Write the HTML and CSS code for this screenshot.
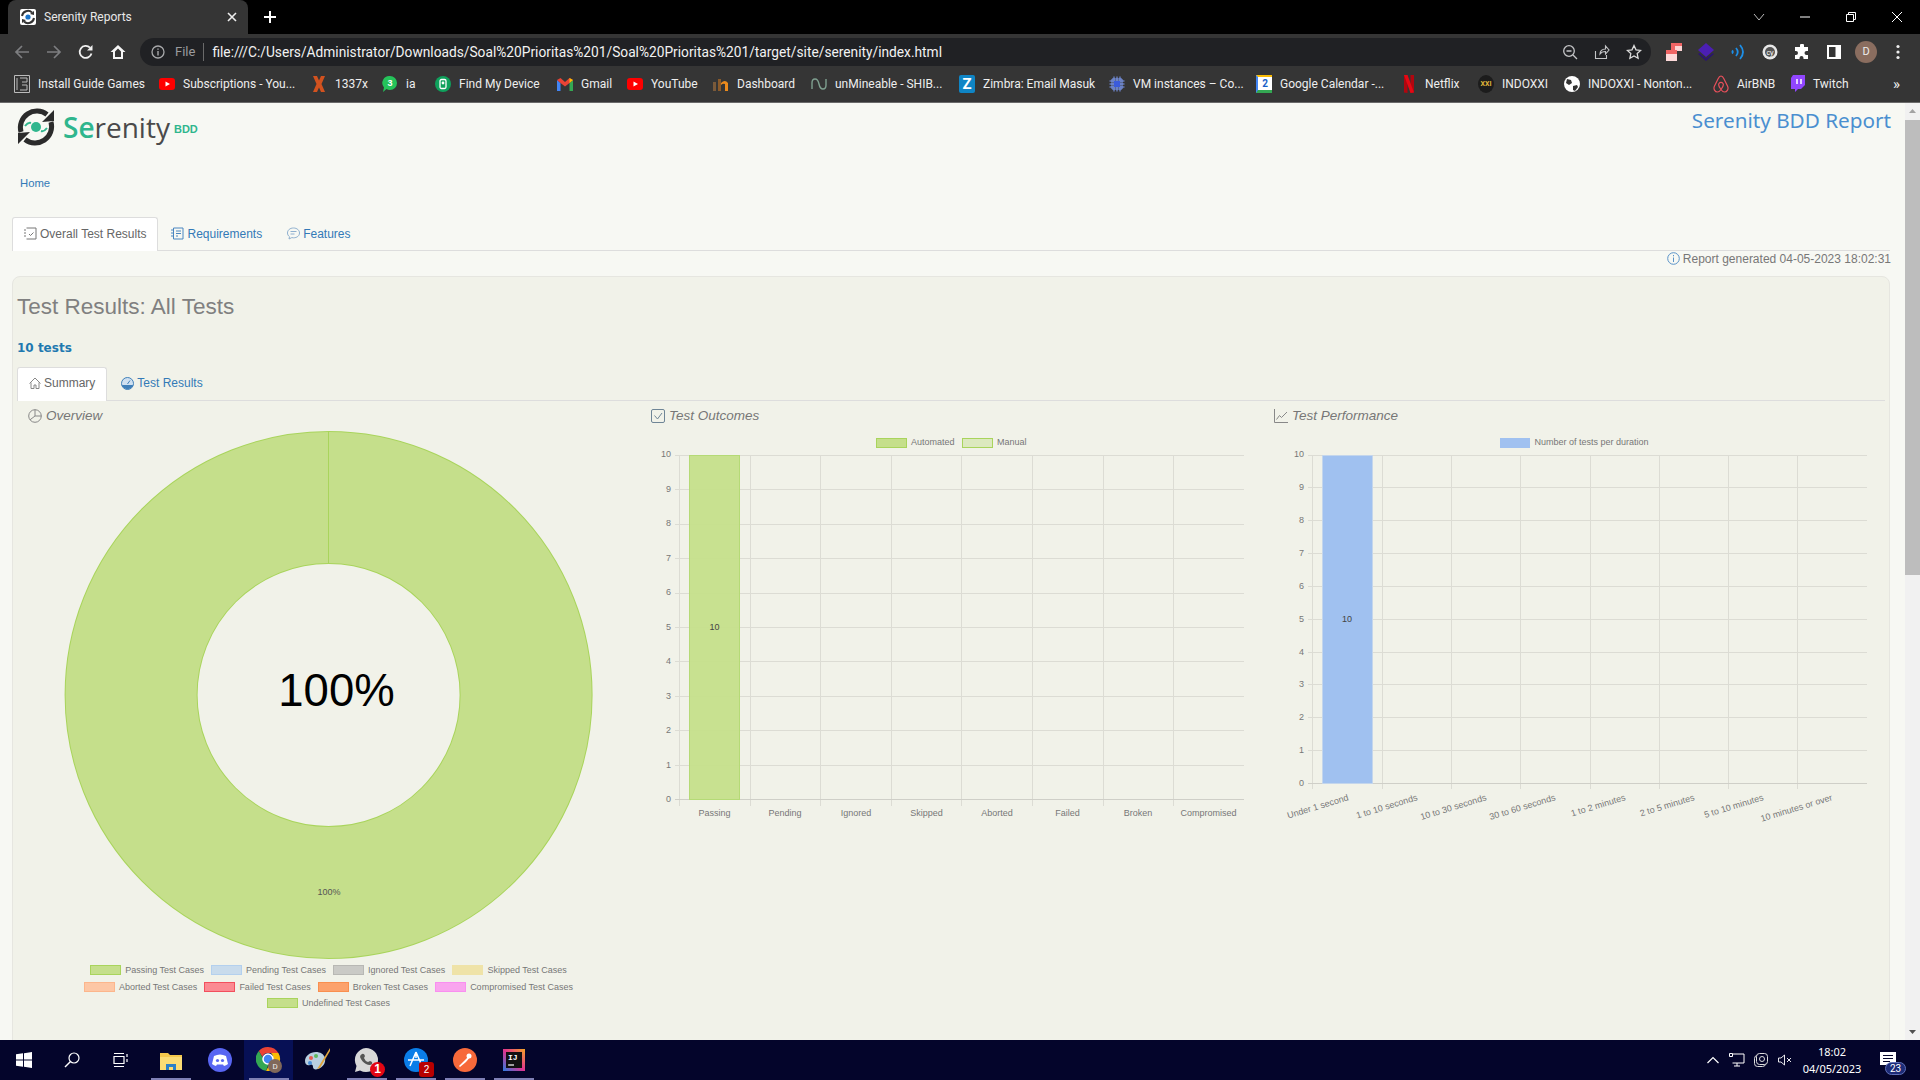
FILE: index.html
```html
<!DOCTYPE html>
<html>
<head>
    <title>Serenity Reports</title>
    <link rel="stylesheet" href="styles.css">
</head>
<body>
    <div class="tabstrip">
        <div class="browser-tab">
            <svg class="favicon" width="16" height="16" viewBox="0 0 16 16"><rect width="16" height="16" rx="2" fill="#fff"/><path d="M2 7a6 6 0 0 1 10-3.500M14 9a6 6 0 0 1-10 3.500" fill="none" stroke="#333" stroke-width="2"/><path d="M10 5l4-3v4zM6 11l-4 3v-4z" fill="#333"/><circle cx="8" cy="8" r="2.600" fill="#1a73c8"/></svg>
            <span class="browser-tab-title">Serenity Reports</span>
            <svg width="10" height="10" viewBox="0 0 10 10"><path d="M1 1l8 8M9 1l-8 8" stroke="#eee" stroke-width="1.600"/></svg>
        </div>
        <svg class="new-tab" width="14" height="14" viewBox="0 0 14 14"><path d="M7 1v12M1 7h12" stroke="#fff" stroke-width="2"/></svg>
        <div class="window-controls">
            <svg width="46" height="14" viewBox="0 0 46 14"><path d="M18 4l5 6 5-6" fill="none" stroke="#bbb"/></svg>
            <svg width="46" height="14" viewBox="0 0 46 14"><path d="M18 7h10" stroke="#fff"/></svg>
            <svg width="46" height="14" viewBox="0 0 46 14"><path d="M18.500 4.500h7v7h-7zM20.500 4.500v-2h7v7h-2" fill="none" stroke="#fff"/></svg>
            <svg width="46" height="14" viewBox="0 0 46 14"><path d="M18 2l10 10M28 2l-10 10" stroke="#fff"/></svg>
        </div>
    </div>

    <div class="toolbar">
        <div class="tool"><svg width="16" height="16" viewBox="0 0 16 16"><path d="M15 8H2M8 2L2 8l6 6" fill="none" stroke="#7d7e80" stroke-width="1.700"/></svg></div>
        <div class="tool"><svg width="16" height="16" viewBox="0 0 16 16"><path d="M1 8h13M8 2l6 6-6 6" fill="none" stroke="#7d7e80" stroke-width="1.700"/></svg></div>
        <div class="tool"><svg width="16" height="16" viewBox="0 0 16 16"><path d="M13.500 9.500A6 6 0 1 1 12 3.700" fill="none" stroke="#f0f0f0" stroke-width="1.800"/><path d="M14.500 1v5.500H9z" fill="#f0f0f0"/></svg></div>
        <div class="tool"><svg width="18" height="18" viewBox="0 0 18 18"><path d="M9 2L1.500 9H4v7h10V9h2.500zM6 14V8.500L9 5.500l3 3V14z" fill="#f5f5f5" fill-rule="evenodd"/></svg></div>
        <div class="address">
            <svg width="16" height="16" viewBox="0 0 16 16"><circle cx="8" cy="8" r="6" fill="none" stroke="#a8a9ab" stroke-width="1.300"/><path d="M8 7v4.500M8 4.500v1.300" stroke="#a8a9ab" stroke-width="1.400"/></svg>
            <span class="address-scheme">File</span>
            <span class="address-url">file:///C:/Users/Administrator/Downloads/Soal%20Prioritas%201/Soal%20Prioritas%201/target/site/serenity/index.html</span>
            <div class="address-actions">
                <svg width="16" height="16" viewBox="0 0 16 16"><circle cx="7" cy="7" r="5.300" fill="none" stroke="#c4c5c7" stroke-width="1.300"/><path d="M11 11l4 4M4.500 7h5" stroke="#c4c5c7" stroke-width="1.300"/></svg>
                <svg width="16" height="16" viewBox="0 0 16 16"><path d="M1.500 7v7.500h11V11M6 10c0-3 2-5 5.500-5V2L15 6l-3.500 4V7.500C9 7.500 7 8.500 6 10z" fill="none" stroke="#c4c5c7" stroke-width="1.100"/></svg>
                <svg width="16" height="16" viewBox="0 0 16 16"><path d="M8 1.500l2 4.300 4.700.6-3.500 3.200.9 4.700L8 12l-4.100 2.300.9-4.700L1.300 6.400 6 5.800z" fill="none" stroke="#dcdcdc" stroke-width="1.300"/></svg>
            </div>
        </div>
        <div class="extensions">
            <div class="tool"><svg width="16" height="18" viewBox="0 0 16 18"><path d="M5 0h11v7H5z" fill="#f06565"/><path d="M9 3h7v5H9z" fill="#fcd5d5"/><path d="M0 7h11v4H0z" fill="#f06565"/><path d="M0 11h11v7H0z" fill="#fdd9d9"/></svg></div>
            <div class="tool"><svg width="16" height="18" viewBox="0 0 16 18"><path d="M8 0l8 7-8 7-8-7z" fill="#4b1fb3"/><path d="M1.500 10L8 15.500 14.500 10 16 11l-8 7-8-7z" fill="#2b1570"/></svg></div>
            <div class="tool"><svg width="14" height="16" viewBox="0 0 14 16"><path d="M1 6.500q1.500 1.500 0 3M5 4q3.500 4 0 8M9 1q6 7 0 14" fill="none" stroke="#1d8fe8" stroke-width="1.800"/></svg></div>
            <div class="tool"><svg width="16" height="16" viewBox="0 0 16 16"><circle cx="8" cy="8" r="7.500" fill="#e8e8e8"/><circle cx="8" cy="8" r="5" fill="#555"/><text class="ext-letters" x="8" y="10.500">cy</text></svg></div>
            <div class="tool"><svg width="16" height="16" viewBox="0 0 16 16"><path d="M6 1.500a2 2 0 0 1 4 0V3h4v4h-1.500a2 2 0 0 0 0 4H14v4H9.500v-1a2 2 0 0 0-4 0v1H1v-4h1a2 2 0 0 0 0-4H1V3h5z" fill="#fff"/></svg></div>
            <div class="tool"><svg width="14" height="14" viewBox="0 0 14 14"><path d="M0 0h14v14H0zM8.500 2H2v10h6.500z" fill="#fff" fill-rule="evenodd"/></svg></div>
            <div class="tool"><span class="avatar">D</span></div>
            <div class="tool"><svg width="4" height="16" viewBox="0 0 4 16"><circle cx="2" cy="2.500" r="1.600" fill="#eee"/><circle cx="2" cy="8" r="1.600" fill="#eee"/><circle cx="2" cy="13.500" r="1.600" fill="#eee"/></svg></div>
        </div>
    </div>

    <div class="bookmarks">
        <div class="bookmark"><svg width="16" height="18" viewBox="0 0 16 18"><path d="M.5.500h15v17H.5z" fill="#333" stroke="#bbb"/><path d="M3 3v12M6 3h7v4H8M6 15h7v-5H8" fill="none" stroke="#bbb"/></svg>Install Guide Games</div>
        <div class="bookmark"><svg width="16" height="12" viewBox="0 0 16 12"><rect width="16" height="12" rx="3" fill="#f00"/><path d="M6.500 3.500v5L11 6z" fill="#fff"/></svg>Subscriptions - You...</div>
        <div class="bookmark"><svg width="16" height="16" viewBox="-1 0 16 16"><path d="M1 0h4l2 4.500L9 0h4L9.500 8l3.500 8H9L7 11.500 5 16H1l3.500-8z" fill="#d2521f"/></svg>1337x</div>
        <div class="bookmark"><svg width="16" height="18" viewBox="0 0 16 18"><path d="M8 1a7 7 0 0 1 0 14q-2 0-3.500-1L1 17l1-4.500A7 7 0 0 1 8 1z" fill="#25c35a"/><text class="ext-digit" x="8" y="11">3</text></svg>ia</div>
        <div class="bookmark"><svg width="16" height="16" viewBox="0 0 16 16"><circle cx="8" cy="8" r="8" fill="#0fa15c"/><rect x="5" y="3.500" width="6" height="9" rx="1.500" fill="none" stroke="#fff" stroke-width="1.300"/><circle cx="8" cy="7" r="1.400" fill="#fff"/></svg>Find My Device</div>
        <div class="bookmark"><svg width="16" height="13" viewBox="0 0 16 13"><path d="M0 2v11h3.500V5z" fill="#4285f4"/><path d="M16 2v11h-3.500V5z" fill="#34a853"/><path d="M0 2l3.500-2L8 4l4.500-4L16 2l-3.500 3L8 8.500 3.500 5z" fill="#ea4335"/><path d="M12.500 0L16 2l-3.500 3z" fill="#fbbc04"/></svg>Gmail</div>
        <div class="bookmark"><svg width="16" height="12" viewBox="0 0 16 12"><rect width="16" height="12" rx="3" fill="#f00"/><path d="M6.500 3.500v5L11 6z" fill="#fff"/></svg>YouTube</div>
        <div class="bookmark"><svg width="16" height="14" viewBox="0 0 16 14"><path d="M0 5h3v9H0z" fill="#7a5a3a"/><path d="M5 2h3v12H5z" fill="#8a5a2a"/><path d="M8 6q4-4 7 0v8h-3V7q-2-1-4 1z" fill="#ec8a1c"/></svg>Dashboard</div>
        <div class="bookmark"><svg width="16" height="12" viewBox="0 0 16 12"><path d="M1 11V5q0-4 3-4t4 5 4 5 3-4V1" fill="none" stroke="#7fa090" stroke-width="1.400"/></svg>unMineable - SHIB...</div>
        <div class="bookmark"><span class="bookmark-z">Z</span>Zimbra: Email Masuk</div>
        <div class="bookmark"><svg width="16" height="16" viewBox="0 0 16 16"><path d="M3 3h10v10H3zM5 .500v15M8 .500v15M11 .500v15M.500 5h15M.500 8h15M.500 11h15" fill="none" stroke="#7f9cf5"/><rect x="5" y="5" width="6" height="6" fill="#3b5bdb"/></svg>VM instances – Co...</div>
        <div class="bookmark"><span class="bookmark-cal">2</span>Google Calendar -...</div>
        <div class="bookmark"><svg width="16" height="18" viewBox="-3 0 16 18"><path d="M0 0h3.500v18L0 17.500z" fill="#b1060f"/><path d="M6.500 0H10v17.500L6.500 18z" fill="#b1060f"/><path d="M0 0h3.500L10 17.500 6.500 18z" fill="#e50914"/></svg>Netflix</div>
        <div class="bookmark"><span class="bookmark-xxi">XXI</span>INDOXXI</div>
        <div class="bookmark"><svg width="16" height="16" viewBox="0 0 16 16"><circle cx="8" cy="8" r="8" fill="#fff"/><path d="M3 3l4 1 1 3-3 2-3-2zM9 10l4-1 1 2-3 4-2-1z" fill="#333"/></svg>INDOXXI - Nonton...</div>
        <div class="bookmark"><svg width="16" height="18" viewBox="0 0 16 18"><path d="M8 1C6 1 5.500 3 4.500 5L1.500 11c-1.500 3 .5 6 3 6 1.500 0 2.500-1 3.500-2.500C9 16 10 17 11.500 17c2.500 0 4.500-3 3-6l-3-6C10.500 3 10 1 8 1zM8 14.500C6 12 5 10 6 8.500s3-1.500 4 0 0 3.500-2 6z" fill="none" stroke="#e8505b" stroke-width="1.200"/></svg>AirBNB</div>
        <div class="bookmark"><svg width="14" height="18" viewBox="0 0 14 18"><path d="M2 0h12v10l-4 4H7l-3 3v-3H0V3z" fill="#9146ff"/><path d="M6 4v5M10 4v5" stroke="#fff" stroke-width="1.500"/></svg>Twitch</div>
        <span class="bookmark-more">»</span>
    </div>

    <div class="viewport">
        <div class="page">
            <div class="page-header">
                <div class="logo">
                    <svg width="40" height="40" viewBox="0 0 40 40">
                        <path d="M5 25A16.500 16.500 0 0 1 31 7.500M35 15A16.500 16.500 0 0 1 9 32.500" fill="none" stroke="#2b2b2b" stroke-width="5"/>
                        <path d="M26 15l12-1V3zM14 25L2 26v11z" fill="#2b2b2b"/>
                        <circle cx="20" cy="20" r="5" fill="#2fb68d"/>
                        <path d="M9 19q3-4 6-3M31 21q-3 4-6 3" fill="none" stroke="#2fb68d" stroke-width="2"/>
                    </svg>
                    <span class="logo-name"><span class="logo-accent">Se</span>renity</span>
                    <span class="logo-bdd">BDD</span>
                </div>
                <div class="report-name">Serenity BDD Report</div>
            </div>

            <div class="breadcrumb"><a href="#">Home</a></div>

            <div class="tabs">
                <a class="tab active" href="#"><svg width="13" height="13" viewBox="0 0 13 13"><path d="M2.500 1h9.500v11H2.500M0 3h2M0 6h2M0 9h2M5 7l1.500 1.500 3-3" fill="none" stroke="#777"/></svg>Overall Test Results</a>
                <a class="tab" href="#"><svg width="13" height="13" viewBox="0 0 13 13"><path d="M2.500 1h9.500v11H2.500zM0 3h2M0 6h2M0 9h2M5 4h5M5 6.500h5M5 9h2" fill="none" stroke="#4a86c0"/></svg>Requirements</a>
                <a class="tab" href="#"><svg width="13" height="13" viewBox="0 0 13 13"><path d="M6.500 1C3 1 .5 3 .5 6c0 1.500.7 2.800 2 3.700L2 12l2.800-1.400c.5.100 1.100.2 1.700.2 3.500 0 6-2 6-4.800S10 1 6.500 1zM3.500 4.500h6M3.500 7h4" fill="none" stroke="#8fb0cf"/></svg>Features</a>
            </div>

            <div class="generated">
                <svg width="13" height="13" viewBox="0 0 13 13"><circle cx="6.500" cy="6.500" r="5.800" fill="none" stroke="#5a93c8"/><path d="M6.500 5.500v4.500M6.500 3v1.300" stroke="#5a93c8"/></svg>
                Report generated 04-05-2023 18:02:31
            </div>

            <div class="panel">
                <h1>Test Results: All Tests</h1>
                <div class="test-count">10 tests</div>

                <div class="tabs inner-tabs">
                    <a class="tab active" href="#"><svg width="12" height="12" viewBox="0 0 12 12"><path d="M.5 6.500L6 1l5.500 5.500M2 5.500v6h3V8h2v3.500h3v-6" fill="none" stroke="#888"/></svg>Summary</a>
                    <a class="tab" href="#"><svg width="13" height="13" viewBox="0 0 13 13"><circle cx="6.500" cy="6.500" r="6" fill="#cfe0f0" stroke="#3f7fb8"/><path d="M.8 8h11.400A6 6 0 0 1 .8 8z" fill="#3f7fb8"/><path d="M6.500 7l2.500-3.500" stroke="#3f7fb8"/></svg>Test Results</a>
                </div>

                <div class="summary">
                    <section class="summary-col">
                        <h2><svg width="14" height="14" viewBox="0 0 14 14"><circle cx="7" cy="7" r="6.300" fill="none" stroke="#888"/><path d="M7 .7V7l-5 3.800M7 7h6.300" fill="none" stroke="#888"/></svg>Overview</h2>
                        <svg class="donut" width="623" height="532" viewBox="17 430 623 532">
                            <circle cx="328.600" cy="695" r="197.500" fill="none" stroke="#a9d45c" stroke-width="133"/>
                            <circle cx="328.600" cy="695" r="197.500" fill="none" stroke="#c5df8b" stroke-width="131"/>
                            <path d="M328.500 431.500v132" stroke="#a9d45c"/>
                            <text class="donut-total" x="336.500" y="706">100%</text>
                            <text class="donut-slice" x="329" y="895">100%</text>
                        </svg>
                        <div class="legend">
                            <span class="legend-item"><i class="swatch passing"></i>Passing Test Cases</span>
                            <span class="legend-item"><i class="swatch pending"></i>Pending Test Cases</span>
                            <span class="legend-item"><i class="swatch ignored"></i>Ignored Test Cases</span>
                            <span class="legend-item"><i class="swatch skipped"></i>Skipped Test Cases</span>
                            <span class="legend-item"><i class="swatch aborted"></i>Aborted Test Cases</span>
                            <span class="legend-item"><i class="swatch failed"></i>Failed Test Cases</span>
                            <span class="legend-item"><i class="swatch broken"></i>Broken Test Cases</span>
                            <span class="legend-item"><i class="swatch compromised"></i>Compromised Test Cases</span>
                            <span class="legend-item"><i class="swatch passing"></i>Undefined Test Cases</span>
                        </div>
                    </section>

                    <section class="summary-col">
                        <h2><svg width="14" height="14" viewBox="0 0 14 14"><rect x=".5" y=".5" width="13" height="13" rx="1.500" fill="none" stroke="#6f8596"/><path d="M3.500 6.500L6.500 10l4.500-6" fill="none" stroke="#6f8596"/></svg>Test Outcomes</h2>
                        <svg class="chart" width="623" height="400" viewBox="640 430 623 400">
                            <rect x="876.500" y="438.500" width="30" height="9" fill="#c5df8b" stroke="#a9d45c"/>
                            <text class="chart-text" x="911" y="444.500">Automated</text>
                            <rect x="962.500" y="438.500" width="30" height="9" fill="#dce9bf" stroke="#a9d45c"/>
                            <text class="chart-text" x="997" y="444.500">Manual</text>
                            <path class="grid" d="M675 455.500h569M675 489.500h569M675 524.500h569M675 558.500h569M675 593.500h569M675 627.500h569M675 661.500h569M675 696.500h569M675 730.500h569M675 765.500h569"/>
                            <path class="grid" d="M679.500 455v351M750.500 455v351M820.500 455v351M891.500 455v351M961.500 455v351M1032.500 455v351M1103.500 455v351M1173.500 455v351"/>
                            <path class="axis" d="M675 799.500h569"/>
                            <rect x="689.500" y="455.500" width="50" height="344" fill="#c5df8b" fill-opacity=".95" stroke="#b5da76"/>
                            <text class="tick-y" x="671" y="457">10</text>
                            <text class="tick-y" x="671" y="492">9</text>
                            <text class="tick-y" x="671" y="526">8</text>
                            <text class="tick-y" x="671" y="561">7</text>
                            <text class="tick-y" x="671" y="595">6</text>
                            <text class="tick-y" x="671" y="630">5</text>
                            <text class="tick-y" x="671" y="664">4</text>
                            <text class="tick-y" x="671" y="699">3</text>
                            <text class="tick-y" x="671" y="733">2</text>
                            <text class="tick-y" x="671" y="768">1</text>
                            <text class="tick-y" x="671" y="802">0</text>
                            <text class="bar-value" x="714.500" y="630">10</text>
                            <text class="tick-x" x="714.500" y="816">Passing</text>
                            <text class="tick-x" x="785" y="816">Pending</text>
                            <text class="tick-x" x="856" y="816">Ignored</text>
                            <text class="tick-x" x="926.500" y="816">Skipped</text>
                            <text class="tick-x" x="997" y="816">Aborted</text>
                            <text class="tick-x" x="1067.500" y="816">Failed</text>
                            <text class="tick-x" x="1138" y="816">Broken</text>
                            <text class="tick-x" x="1208.500" y="816">Compromised</text>
                        </svg>
                    </section>

                    <section class="summary-col">
                        <h2><svg width="14" height="14" viewBox="0 0 14 14"><path d="M.5 0v13.500H14M2.500 10.500l3-4 2 2L13 3" fill="none" stroke="#888"/></svg>Test Performance</h2>
                        <svg class="chart" width="623" height="400" viewBox="1263 430 623 400">
                            <rect x="1500" y="438" width="30" height="10" fill="#a0c1f0"/>
                            <text class="chart-text" x="1534.500" y="444.500">Number of tests per duration</text>
                            <path class="grid" d="M1308 455.500h559M1308 487.500h559M1308 520.500h559M1308 553.500h559M1308 586.500h559M1308 619.500h559M1308 652.500h559M1308 684.500h559M1308 717.500h559M1308 750.500h559"/>
                            <path class="grid" d="M1312.500 455v334M1382.500 455v334M1451.500 455v334M1520.500 455v334M1590.500 455v334M1659.500 455v334M1728.500 455v334M1797.500 455v334"/>
                            <path class="axis" d="M1308 783.500h559"/>
                            <rect x="1322.500" y="455.500" width="50" height="328" fill="#a0c1f0" stroke="#c4d6ec"/>
                            <text class="tick-y" x="1304" y="457">10</text>
                            <text class="tick-y" x="1304" y="490">9</text>
                            <text class="tick-y" x="1304" y="523">8</text>
                            <text class="tick-y" x="1304" y="556">7</text>
                            <text class="tick-y" x="1304" y="589">6</text>
                            <text class="tick-y" x="1304" y="622">5</text>
                            <text class="tick-y" x="1304" y="655">4</text>
                            <text class="tick-y" x="1304" y="687">3</text>
                            <text class="tick-y" x="1304" y="720">2</text>
                            <text class="tick-y" x="1304" y="753">1</text>
                            <text class="tick-y" x="1304" y="786">0</text>
                            <text class="bar-value" x="1347" y="622">10</text>
                            <text class="tick-slant" transform="translate(1349 800) rotate(-17)">Under 1 second</text>
                            <text class="tick-slant" transform="translate(1418 800) rotate(-17)">1 to 10 seconds</text>
                            <text class="tick-slant" transform="translate(1487 800) rotate(-17)">10 to 30 seconds</text>
                            <text class="tick-slant" transform="translate(1556 800) rotate(-17)">30 to 60 seconds</text>
                            <text class="tick-slant" transform="translate(1626 800) rotate(-17)">1 to 2 minutes</text>
                            <text class="tick-slant" transform="translate(1695 800) rotate(-17)">2 to 5 minutes</text>
                            <text class="tick-slant" transform="translate(1764 800) rotate(-17)">5 to 10 minutes</text>
                            <text class="tick-slant" transform="translate(1833 800) rotate(-17)">10 minutes or over</text>
                        </svg>
                    </section>
                </div>
            </div>
        </div>
        <div class="scrollbar">
            <svg width="15" height="17" viewBox="0 0 15 17"><path d="M4 10l3.500-4 3.500 4z" fill="#a3a3a3"/></svg>
            <div class="scrollbar-thumb"></div>
            <div class="scrollbar-rest"></div>
            <svg width="15" height="17" viewBox="0 0 15 17"><path d="M4 7l3.500 4 3.500-4z" fill="#505050"/></svg>
        </div>
    </div>

    <div class="taskbar">
        <div class="task"><svg width="16" height="16" viewBox="0 0 16 16"><path d="M0 2.300l7-1v6.300H0zM8 1.200L16 0v7.600H8zM0 8.500h7v6.200l-7-1zM8 8.500h8V16l-8-1.200z" fill="#fff"/></svg></div>
        <div class="task"><svg width="16" height="16" viewBox="0 0 16 16"><circle cx="10" cy="6" r="5" fill="none" stroke="#fff" stroke-width="1.200"/><path d="M6.500 9.500L1 15" stroke="#fff" stroke-width="1.400"/></svg></div>
        <div class="task"><svg width="16" height="16" viewBox="0 0 16 16"><path d="M1 1.500h10M1 14.500h10M1 4.500h10v7H1zM14 2v3M14 7v3" fill="none" stroke="#fff" stroke-width="1.200"/></svg></div>
        <div class="task open"><svg width="22" height="19" viewBox="0 0 22 19"><path d="M0 2h8l2 2h12v15H0z" fill="#f5c84c"/><path d="M0 6h22v13H0z" fill="#fbdc74"/><path d="M6 13h10v6h-3v-3H9v3H6z" fill="#2a80c8"/></svg></div>
        <div class="task"><svg width="24" height="24" viewBox="0 0 24 24"><circle cx="12" cy="12" r="12" fill="#5865f2"/><path d="M6 8q6-3 12 0l2 8q-2 1.500-4 2l-1-1.500H9L8 18q-2-.5-4-2z" fill="#fff"/><circle cx="9.500" cy="12.500" r="1.600" fill="#5865f2"/><circle cx="14.500" cy="12.500" r="1.600" fill="#5865f2"/></svg></div>
        <div class="task open current"><svg width="26" height="26" viewBox="0 0 26 26"><path d="M12 0a12 12 0 0 1 10.400 6H12a6 6 0 0 0-5.700 4L2.800 4A12 12 0 0 1 12 0z" fill="#ea4335"/><path d="M2.800 4l5.200 9a6 6 0 0 0 5 3l-3 7.800A12 12 0 0 1 2.800 4z" fill="#34a853"/><path d="M22.400 6A12 12 0 0 1 10 23.800l5-8.800a6 6 0 0 0 0-9z" fill="#fbbc04"/><circle cx="12" cy="12" r="5" fill="#4285f4" stroke="#fff" stroke-width="1.500"/><circle cx="19" cy="19" r="7" fill="#80685a"/><text class="task-avatar" x="19" y="22">D</text></svg></div>
        <div class="task"><svg width="26" height="24" viewBox="0 0 26 24"><path d="M11 4C5 4 0 8 0 13c0 4 3 5 5 4s3 0 3 2 2 3 5 2c5-2 8-6 7-11-1-4-5-6-9-6z" fill="#b9cfe0"/><circle cx="6" cy="10" r="2" fill="#e85a4f"/><circle cx="11" cy="8" r="2" fill="#5fb85f"/><circle cx="5" cy="15" r="2" fill="#4a8fd8"/><path d="M25 0L14 18l-2 3 3-1L25 3z" fill="#e0a43c"/></svg></div>
        <div class="task open"><svg width="26" height="26" viewBox="0 0 26 26"><path d="M12 1a12 12 0 0 1 0 24q-3 0-6-1.500L1 25l1.500-6A12 12 0 0 1 12 1z" fill="#d8d8d8"/><path d="M8 7q2-1 3 2l-1 2q1 3 4 4l2-1q3 1 2 3-2 2-6 0t-6-7q0-2 2-3z" fill="#555"/></svg><span class="badge round">1</span></div>
        <div class="task open"><svg width="24" height="24" viewBox="0 0 24 24"><circle cx="12" cy="12" r="12" fill="#0a7de8"/><path d="M12 4L6 18M12 4l6 14M4 12h16M12 4v6" fill="none" stroke="#fff" stroke-width="1.500"/></svg><span class="badge square">2</span></div>
        <div class="task open"><svg width="24" height="24" viewBox="0 0 24 24"><circle cx="12" cy="12" r="12" fill="#f7693a"/><path d="M6 18l6-6 5-5 1 1-5 6-6 5z" fill="#fff"/><circle cx="16" cy="8" r="2.500" fill="#fff"/></svg></div>
        <div class="task open"><svg width="22" height="22" viewBox="0 0 22 22"><defs><linearGradient id="ij" x1="0" y1="1" x2="1" y2="0"><stop offset="0" stop-color="#2a7de1"/><stop offset=".5" stop-color="#e0338f"/><stop offset="1" stop-color="#f5a623"/></linearGradient></defs><rect width="22" height="22" fill="url(#ij)"/><rect x="3" y="3" width="16" height="16" fill="#111"/><text class="task-ij" x="5" y="11">IJ</text><path d="M5 16h6" stroke="#fff" stroke-width="1.200"/></svg></div>
        <div class="tray">
            <div class="tray-icon"><svg width="12" height="8" viewBox="0 0 12 8"><path d="M.5 7L6 1.500 11.500 7" fill="none" stroke="#fff" stroke-width="1.200"/></svg></div>
            <div class="tray-icon"><svg width="16" height="14" viewBox="0 0 16 14"><path d="M3.500 1H15v9H3.500M8 10v3M5 13h6M.5.500h3v3h-3z" fill="none" stroke="#fff"/></svg></div>
            <div class="tray-icon"><svg width="14" height="14" viewBox="0 0 14 14"><rect x=".5" y="2.500" width="11" height="11" rx="3" fill="none" stroke="#ddd"/><rect x="2.500" y=".5" width="11" height="11" rx="3" fill="#04052b" stroke="#ddd"/><circle cx="8" cy="6" r="2.500" fill="none" stroke="#ddd"/></svg></div>
            <div class="tray-icon"><svg width="14" height="12" viewBox="0 0 14 12"><path d="M.5 4v4h2.500L6.500 11V1L3 4zM9 4l4 4M13 4l-4 4" fill="none" stroke="#fff" stroke-width=".9"/></svg></div>
            <div class="clock"><span>18:02</span><span>04/05/2023</span></div>
            <div class="notifications">
                <svg width="16" height="13" viewBox="0 0 16 13"><path d="M0 0h16v13H0z" fill="#fff"/><path d="M3 3.500h10M3 6.500h10M3 9.500h7" stroke="#04052b"/></svg>
                <span class="notification-count">23</span>
            </div>
        </div>
    </div>
</body>
</html>
```

FILE: styles.css
```css
* {
    box-sizing: border-box;
}

html, body {
    height: 100%;
}

body {
    margin: 0;
    overflow: hidden;
    display: flex;
    flex-direction: column;
    font-family: 'Liberation Sans', Arial, sans-serif;
    background-color: #f7f8f3;
}

a {
    text-decoration: none;
}

svg {
    flex: none;
    display: block;
}

/* browser chrome */
.tabstrip {
    height: 34px;
    display: flex;
    align-items: center;
    background-color: #000;
    padding-left: 8px;
}

.browser-tab {
    width: 240px;
    height: 34px;
    display: flex;
    align-items: center;
    padding: 0 11px 0 12px;
    background-color: #353535;
    border-radius: 8px 8px 0 0;
}

.browser-tab-title {
    flex: 1;
    margin-left: 8px;
    font-family: Roboto, sans-serif;
    font-size: 12px;
    color: #e8e8e8;
}

.new-tab {
    margin-left: 15px;
}

.window-controls {
    margin-left: auto;
    display: flex;
    gap: 0;
}

.toolbar {
    height: 34px;
    display: flex;
    align-items: center;
    padding: 2px 0 0 6px;
    background-color: #353535;
}

.tool {
    width: 32px;
    height: 32px;
    display: flex;
    align-items: center;
    justify-content: center;
}

.address {
    flex: 1;
    height: 28px;
    margin-left: 6px;
    display: flex;
    align-items: center;
    padding: 0 9px 0 10px;
    background-color: #202124;
    border-radius: 14px;
}

.address-scheme {
    margin-left: 9px;
    padding-right: 8px;
    border-right: 1px solid #6a6a6a;
    font-family: Roboto, sans-serif;
    font-size: 13px;
    line-height: 18px;
    color: #9a9b9d;
}

.address-url {
    margin-left: 8px;
    font-family: Roboto, sans-serif;
    font-size: 13.740px;
    color: #f2f2f2;
}

.address-actions {
    margin-left: auto;
    display: flex;
    gap: 16px;
}

.extensions {
    display: flex;
    width: 256px;
    margin-left: 7px;
    margin-right: 6px;
}

.avatar {
    width: 22px;
    height: 22px;
    border-radius: 50%;
    background-color: #8a6d5f;
    color: #eee;
    font-family: Roboto, sans-serif;
    font-size: 11px;
    line-height: 22px;
    text-align: center;
}

.ext-letters {
    font-family: 'Liberation Sans', sans-serif;
    font-size: 7px;
    fill: #fff;
    text-anchor: middle;
}

.ext-digit {
    font-family: 'Liberation Sans', sans-serif;
    font-size: 9px;
    font-weight: bold;
    fill: #fff;
    text-anchor: middle;
}

.bookmarks {
    height: 35px;
    display: grid;
    grid-template-columns: 145px 152px 71px 53px 122px 70px 86px 98px 148px 150px 147px 145px 77px 86px 149px 78px 79px 1fr;
    align-items: center;
    padding: 0 0 2px 14px;
    background-color: #353535;
    border-bottom: 1px solid #6a6a6a;
    font-family: Roboto, sans-serif;
    font-size: 12px;
    color: #eee;
}

.bookmark {
    display: flex;
    align-items: center;
    gap: 8px;
    white-space: nowrap;
}

.bookmark-z {
    width: 16px;
    height: 18px;
    background-color: #0f85c5;
    color: #fff;
    font-weight: bold;
    font-size: 15px;
    line-height: 18px;
    text-align: center;
    border-radius: 2px;
}

.bookmark-cal {
    width: 16px;
    height: 18px;
    background-color: #fff;
    border-left: 2px solid #4285f4;
    border-top: 2px solid #fbbc04;
    border-bottom: 3px solid #34a853;
    color: #1a5fc8;
    font-size: 10px;
    font-weight: bold;
    line-height: 13px;
    text-align: center;
}

.bookmark-xxi {
    width: 16px;
    height: 18px;
    background-color: #1c1c1c;
    border-radius: 50%;
    color: #e0b43a;
    font-size: 7px;
    font-weight: bold;
    line-height: 18px;
    text-align: center;
}

.bookmark-more {
    padding-left: 23px;
    font-size: 15px;
    color: #eee;
}

/* report page */
.viewport {
    flex: 1;
    min-height: 0;
    display: flex;
}

.page {
    flex: 1;
    min-width: 0;
    overflow: hidden;
    padding: 0 15px 0 12px;
}

.page-header {
    height: 62px;
    display: flex;
    justify-content: space-between;
    align-items: flex-start;
    padding: 4px 0 0 4px;
}

.logo {
    display: flex;
    align-items: center;
}

.logo-name {
    margin-left: 7px;
    font-family: 'Open Sans', sans-serif;
    font-size: 28px;
    line-height: 40px;
    color: #4a4a4a;
}

.logo-accent {
    font-weight: 600;
    color: #2fb68d;
}

.logo-bdd {
    margin: 3px 0 0 4px;
    font-size: 11px;
    font-weight: bold;
    color: #2fb68d;
}

.report-name {
    margin-right: -1px;
    font-family: 'Noto Sans', sans-serif;
    font-size: 20.700px;
    line-height: 26px;
    color: #4a8fd0;
}

.breadcrumb {
    height: 36px;
    margin-bottom: 16px;
    padding-left: 8px;
    font-size: 11.300px;
    line-height: 36px;
}

.breadcrumb a {
    color: #337ab7;
}

.tabs {
    display: flex;
    height: 34px;
    border-bottom: 1px solid #ddd;
}

.tab {
    display: flex;
    align-items: center;
    gap: 3px;
    height: 34px;
    padding: 0 11px 2px 12px;
    border: 1px solid transparent;
    border-bottom: 0;
    font-size: 12px;
    color: #337ab7;
}

.tab.active {
    padding: 0 11px 2px 11px;
    background-color: #fff;
    border-color: #ddd;
    border-radius: 3px 3px 0 0;
    color: #666;
}

.generated {
    display: flex;
    justify-content: flex-end;
    align-items: center;
    gap: 3px;
    height: 13px;
    margin: 1px -1px 11px 0;
    font-size: 12px;
    color: #777;
}

.panel {
    min-height: 800px;
    padding: 0 4px;
    background-color: #f1f2e9;
    border: 1px solid #e6e6e0;
    border-radius: 8px;
}

h1 {
    margin: 15px 0 0;
    font-size: 22.500px;
    font-weight: normal;
    line-height: 30px;
    color: #808080;
}

.test-count {
    margin: 17px 0 10px;
    font-family: 'DejaVu Sans', sans-serif;
    font-size: 12px;
    font-weight: bold;
    line-height: 18px;
    color: #1f79b0;
}

.inner-tabs .tab {
    padding: 0 10px 3px 13px;
}

.inner-tabs .tab.active {
    padding: 0 11px 3px;
}

.summary {
    display: grid;
    grid-template-columns: repeat(3, 623px);
}

h2 {
    height: 29px;
    margin: 0;
    display: flex;
    align-items: center;
    gap: 4px;
    padding-left: 11px;
    font-size: 13.500px;
    font-style: italic;
    font-weight: normal;
    color: #777;
}

.donut-total {
    font-size: 45.500px;
    text-anchor: middle;
    fill: #000;
}

.donut-slice {
    font-size: 9px;
    text-anchor: middle;
    fill: #555;
}

.legend {
    display: flex;
    flex-wrap: wrap;
    justify-content: center;
    row-gap: 4.500px;
    column-gap: 7px;
    width: 500px;
    margin: 2px auto 0;
    font-size: 9px;
    line-height: 12px;
    color: #777;
}

.legend-item {
    display: flex;
    align-items: center;
    gap: 4px;
}

.swatch {
    width: 31px;
    height: 10px;
    border: 1px solid;
}

.swatch.passing { background-color: #c5df8b; border-color: #a9d45c; }
.swatch.pending { background-color: #c8dbec; border-color: #b3d0ee; }
.swatch.ignored { background-color: #cacac6; border-color: #b8b8b4; }
.swatch.skipped { background-color: #efe3a8; border-color: #efe3a8; }
.swatch.aborted { background-color: #fdc7a5; border-color: #fcb68c; }
.swatch.failed { background-color: #fb8a92; border-color: #f24f5d; }
.swatch.broken { background-color: #fca26c; border-color: #f98f4f; }
.swatch.compromised { background-color: #f9a5ee; border-color: #f98ff0; }

.chart text {
    font-size: 9px;
    fill: #777;
}

.grid {
    fill: none;
    stroke: #dcdcd4;
}

.axis {
    fill: none;
    stroke: #cfcfc8;
}

.chart .tick-y {
    text-anchor: end;
}

.chart .tick-x {
    text-anchor: middle;
}

.chart .tick-slant {
    text-anchor: end;
}

.chart .bar-value {
    text-anchor: middle;
    fill: #444;
}

.scrollbar {
    width: 15px;
    display: flex;
    flex-direction: column;
    background-color: #f1f1f1;
}

.scrollbar-thumb {
    height: 455px;
    background-color: #bdbdbd;
}

.scrollbar-rest {
    flex: 1;
}

/* windows taskbar */
.taskbar {
    height: 40px;
    display: flex;
    background-color: #04052b;
}

.task {
    position: relative;
    width: 49px;
    display: flex;
    align-items: center;
    justify-content: center;
}

.task:nth-child(-n+2) {
    width: 48px;
}

.task:nth-child(3) {
    width: 50px;
}

.task.open::after {
    content: "";
    position: absolute;
    left: 5px;
    right: 4px;
    bottom: 0;
    height: 2px;
    background-color: #7f80b5;
}

.task.current {
    background-color: #071055;
}

.task-avatar {
    font-family: Roboto, sans-serif;
    font-size: 8px;
    fill: #eee;
    text-anchor: middle;
}

.task-ij {
    font-family: 'Liberation Mono', monospace;
    font-size: 8px;
    font-weight: bold;
    fill: #fff;
}

.badge {
    position: absolute;
    right: 6px;
    bottom: 3px;
    width: 15px;
    height: 15px;
    background-color: #e30613;
    color: #fff;
    font-size: 12px;
    line-height: 15px;
    text-align: center;
}

.badge.round {
    border-radius: 50%;
    font-weight: bold;
}

.badge.square {
    border-radius: 3px;
    background-color: #b80000;
    font-size: 10px;
}

.tray {
    margin-left: auto;
    display: grid;
    grid-template-columns: 24px 24px 24px 24px 70px 53px;
    align-items: center;
}

.tray-icon {
    display: flex;
    justify-content: center;
}

.clock {
    display: flex;
    flex-direction: column;
    align-items: center;
    gap: 2px;
    margin-top: -1px;
    font-family: 'Noto Sans', sans-serif;
    font-size: 11px;
    line-height: 15px;
    color: #fff;
}

.notifications {
    position: relative;
    height: 40px;
    padding: 12px 0 0 13px;
}

.notification-count {
    position: absolute;
    left: 18px;
    top: 22px;
    width: 21px;
    height: 13px;
    border-radius: 7px;
    background-color: #1d2c78;
    border: 1px solid #6070b8;
    color: #fff;
    font-family: Roboto, sans-serif;
    font-size: 10px;
    line-height: 11px;
    text-align: center;
}
```
